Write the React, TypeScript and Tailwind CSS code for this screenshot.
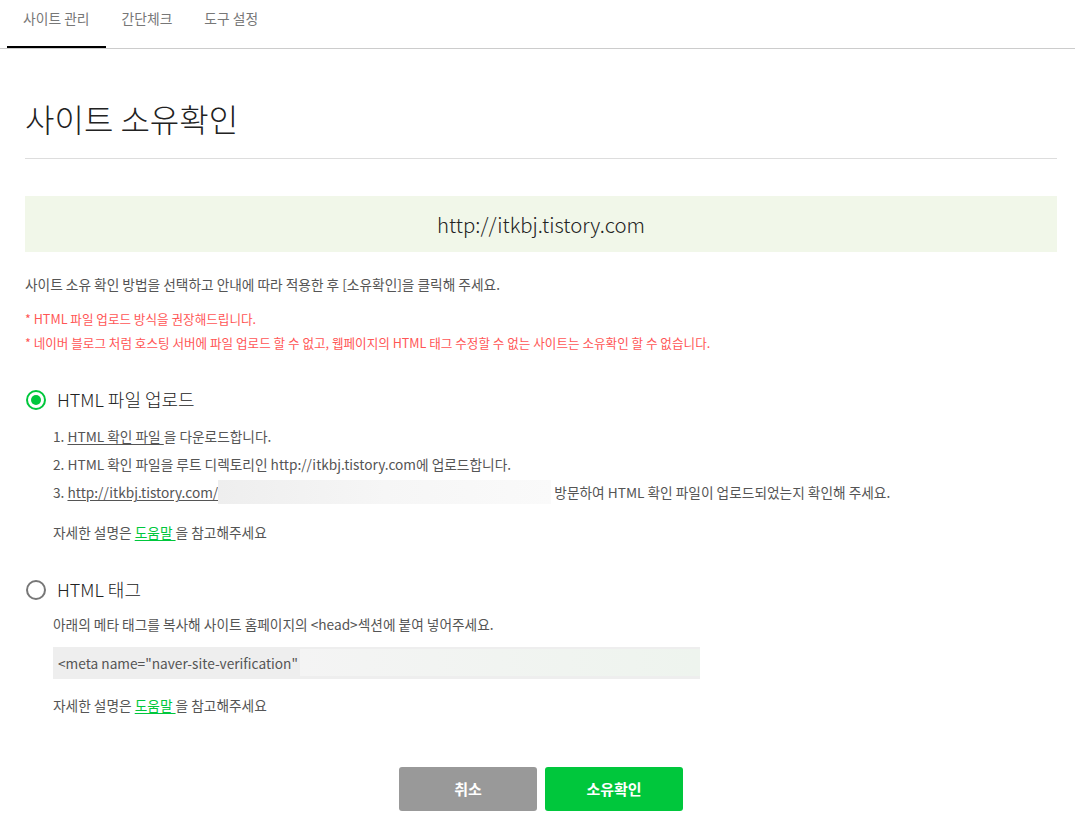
import { useState } from 'react';

const KR = { fontFamily: '"Noto Sans CJK KR", "Noto Sans", sans-serif' };

function Radio({ checked }: { checked: boolean }) {
  return checked ? (
    <span className="flex h-[20px] w-[20px] items-center justify-center rounded-full border-2 border-[#00c73c]">
      <span className="h-[10px] w-[10px] rounded-full bg-[#00c73c]" />
    </span>
  ) : (
    <span className="h-[20px] w-[20px] rounded-full border-2 border-[#777]" />
  );
}

function HelpLine() {
  return (
    <p className="text-[13.7px] text-[#555]">
      자세한 설명은{' '}
      <a className="text-[#00c73c] underline underline-offset-2">도움말 </a>을 참고해주세요
    </p>
  );
}

export default function App() {
  const [method, setMethod] = useState<'file' | 'tag'>('file');
  const tabs = ['사이트 관리', '간단체크', '도구 설정'];

  return (
    <div className="min-h-[836px] bg-white" style={KR}>
      <div className="flex border-b border-[#ccc] pl-[7px]">
        {tabs.map((t, i) => (
          <div
            key={t}
            className={
              i === 0
                ? 'h-[48px] -mb-px border-b-2 border-black px-[16px] pt-[8px] text-[13.8px] text-[#777]'
                : 'h-[48px] px-[16px] pt-[8px] text-[13.8px] text-[#777]'
            }
          >
            {t}
          </div>
        ))}
      </div>

      <div className="px-[25px] pr-[18px]">
        <h1 className="pt-[46px] pb-[17px] text-[32px] font-light leading-[46px] text-[#222]">
          사이트 소유확인
        </h1>
        <div className="border-t border-[#ddd]" />

        <div className="mt-[37px] flex h-[56px] items-center justify-center bg-[#f1f7e9] text-[20.4px] font-light text-[#222]">
          http://itkbj.tistory.com
        </div>

        <p className="mt-[22px] text-[13.7px] text-[#555]">
          사이트 소유 확인 방법을 선택하고 안내에 따라 적용한 후 [소유확인]을 클릭해 주세요.
        </p>
        <p className="mt-[15px] text-[12.6px] text-[#ff5656]">* HTML 파일 업로드 방식을 권장해드립니다.</p>
        <p className="mt-[6px] text-[12.6px] text-[#ff5656]">
          * 네이버 블로그 처럼 호스팅 서버에 파일 업로드 할 수 없고, 웹페이지의 HTML 태그 수정할 수 없는 사이트는 소유확인 할 수 없습니다.
        </p>

        <button
          className="mt-[33px] flex items-center gap-[11px] pl-[1px]"
          onClick={() => setMethod('file')}
        >
          <Radio checked={method === 'file'} />
          <span className="text-[18px] font-light text-[#222]">HTML 파일 업로드</span>
        </button>
        <div className="mt-[9px] pl-[28px] text-[13.7px] leading-[28px] text-[#555]">
          <p>
            1. <a className="underline underline-offset-2">HTML 확인 파일 </a>을 다운로드합니다.
          </p>
          <p>2. HTML 확인 파일을 루트 디렉토리인 http://itkbj.tistory.com에 업로드합니다.</p>
          <p className="flex items-center">
            3.&nbsp;<a className="underline underline-offset-2">http://itkbj.tistory.com/</a>
            <span className="h-[24px] w-[333px] bg-gradient-to-r from-[#eeeeee] via-[#f6f6f6] to-[#fafafa]" />
            &nbsp;방문하여 HTML 확인 파일이 업로드되었는지 확인해 주세요.
          </p>
          <div className="mt-[12px]">
            <HelpLine />
          </div>
        </div>

        <button
          className="mt-[30px] flex items-center gap-[11px] pl-[1px]"
          onClick={() => setMethod('tag')}
        >
          <Radio checked={method === 'tag'} />
          <span className="text-[18px] font-light text-[#222]">HTML 태그</span>
        </button>
        <div className="pl-[28px] text-[13.7px] text-[#555]">
          <p className="mt-[11px]">아래의 메타 태그를 복사해 사이트 홈페이지의 &lt;head&gt;섹션에 붙여 넣어주세요.</p>
          <div className="mt-[12px] flex h-[32px] w-[647px] items-center bg-[#eeeeee] pl-[5px] text-[#555]">
            <span>&lt;meta name="naver-site-verification"</span>
            <span className="ml-[2px] h-[27px] flex-1 bg-gradient-to-r from-[#f4f4f4] to-[#eef4ee]" />
          </div>
          <div className="mt-[16px]">
            <HelpLine />
          </div>
        </div>

        <div className="mt-[52px] flex justify-center gap-[8px] pb-[25px]">
          <button className="h-[44px] w-[138px] rounded-[3px] bg-[#999] text-[15px] font-bold text-white">
            취소
          </button>
          <button className="h-[44px] w-[138px] rounded-[3px] bg-[#00c73c] text-[15px] font-bold text-white">
            소유확인
          </button>
        </div>
      </div>
    </div>
  );
}
